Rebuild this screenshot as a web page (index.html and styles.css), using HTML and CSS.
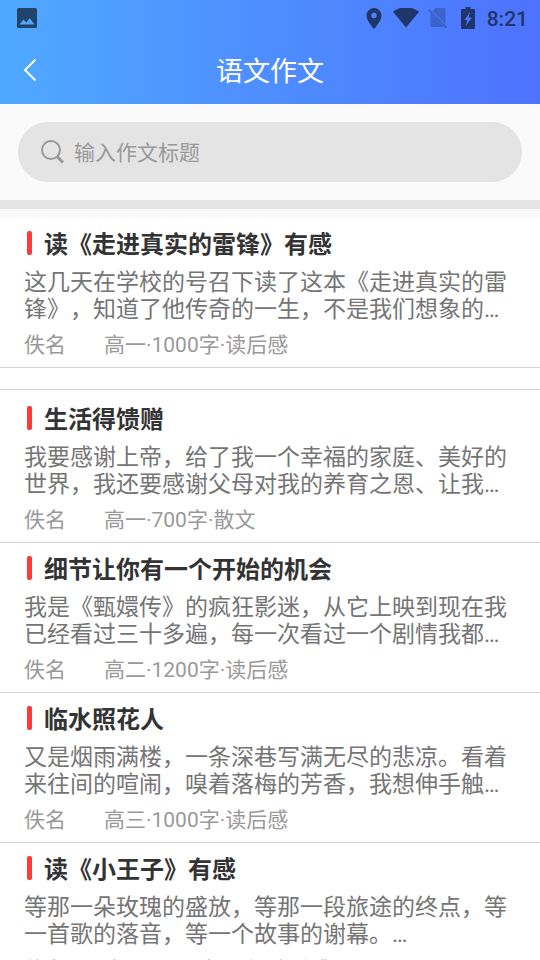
FILE: index.html
```html
<!DOCTYPE html>
<html lang="zh-CN">
<head>
<meta charset="utf-8">
<meta name="viewport" content="width=device-width, initial-scale=1">
<title>语文作文</title>
<link rel="stylesheet" href="styles.css">
</head>
<body>
<header class="top">
  <div class="status">
    <svg class="status-photo" width="20" height="20" viewBox="0 0 20 20"><path fill-rule="evenodd" d="M1.500 0h17A1.500 1.500 0 0 1 20 1.500v17a1.500 1.500 0 0 1-1.500 1.500h-17A1.500 1.500 0 0 1 0 18.500v-17A1.500 1.500 0 0 1 1.500 0zM2.500 16.500h15L12.700 10 9.300 14.500 6.500 11.500z"/></svg>
    <div class="status-right">
      <svg width="16" height="21" viewBox="0 0 16 21"><path fill-rule="evenodd" d="M8 0a7.500 7.500 0 0 0-7.500 7.500C.5 13 8 21 8 21s7.500-8 7.500-13.500A7.500 7.500 0 0 0 8 0zm0 4.800a2.700 2.700 0 1 1 0 5.400 2.700 2.700 0 0 1 0-5.400z"/></svg>
      <svg class="wifi" width="26" height="21" viewBox="0 0 26 21"><path d="M13 19.500 0 3.800C7-2 19-2 26 3.800z"/></svg>
      <svg class="sim" width="20" height="21" viewBox="0 0 20 21"><path d="M7.500 0H16a1.500 1.500 0 0 1 1.500 1.500v14.700L4.700 3zM2.500 5.200 16 18.700q-.4.300-1 .3H4a1.500 1.500 0 0 1-1.500-1.500z"/><path d="M1.500 1 0 2.500l17.800 18 1.500-1.500z"/></svg>
      <svg class="battery" width="14" height="22" viewBox="0 0 14 22"><path fill-rule="evenodd" d="M4.500 0h5v2H13a1 1 0 0 1 1 1v18a1 1 0 0 1-1 1H1a1 1 0 0 1-1-1V3a1 1 0 0 1 1-1h3.500zM9 5 3.500 13H6.200L4.800 19 10.800 10.500H7.500z"/></svg>
      <time>8:21</time>
    </div>
  </div>
  <div class="nav">
    <button class="back" type="button" aria-label="返回"><svg width="14" height="24" viewBox="0 0 14 24"><path d="M12.500 1.500 2 12l10.500 10.500"/></svg></button>
    <h1>语文作文</h1>
  </div>
</header>
<main>
  <form class="search" role="search">
    <label class="search-box">
      <svg width="24" height="24" viewBox="0 0 24 24"><circle cx="10" cy="9" r="9"/><path d="m16 15.500 6 6"/></svg>
      <input type="search" placeholder="输入作文标题" aria-label="输入作文标题">
    </label>
  </form>
  <div class="list">
    <article class="item">
      <h2>读《走进真实的雷锋》有感</h2>
      <p class="summary">这几天在学校的号召下读了这本《走进真实的雷锋》，知道了他传奇的一生，不是我们想象的…</p>
      <p class="meta"><span>佚名</span><span>高一·1000字·读后感</span></p>
    </article>
    <div class="slot"></div>
    <article class="item">
      <h2>生活得馈赠</h2>
      <p class="summary">我要感谢上帝，给了我一个幸福的家庭、美好的世界，我还要感谢父母对我的养育之恩、让我…</p>
      <p class="meta"><span>佚名</span><span>高一·700字·散文</span></p>
    </article>
    <article class="item">
      <h2>细节让你有一个开始的机会</h2>
      <p class="summary">我是《甄嬛传》的疯狂影迷，从它上映到现在我已经看过三十多遍，每一次看过一个剧情我都…</p>
      <p class="meta"><span>佚名</span><span>高二·1200字·读后感</span></p>
    </article>
    <article class="item">
      <h2>临水照花人</h2>
      <p class="summary">又是烟雨满楼，一条深巷写满无尽的悲凉。看着来往间的喧闹，嗅着落梅的芳香，我想伸手触…</p>
      <p class="meta"><span>佚名</span><span>高三·1000字·读后感</span></p>
    </article>
    <article class="item">
      <h2>读《小王子》有感</h2>
      <p class="summary">等那一朵玫瑰的盛放，等那一段旅途的终点，等一首歌的落音，等一个故事的谢幕。…</p>
      <p class="meta"><span>佚名</span><span>高一·1000字以上·读后感</span></p>
    </article>
  </div>
</main>
</body>
</html>
```
FILE: styles.css
```css
* { box-sizing: border-box; margin: 0; padding: 0; }

body {
  background: #fafafa;
  color: #333;
  font-family: Roboto, "Noto Sans CJK SC", sans-serif;
  text-spacing-trim: space-all;
}

body::-webkit-scrollbar { display: none; }

.top {
  background: linear-gradient(to right, #4fa9ff, #4d72ff);
}

.status {
  display: flex;
  align-items: center;
  justify-content: space-between;
  height: 36px;
  padding: 0 12px 0 17px;
  fill: #203569;
  color: #203569;
}

.status-photo { fill: #20446a; }

.status-right { display: flex; align-items: center; }

.wifi { margin-left: 11px; }
.sim { margin-left: 9px; opacity: .35; }
.battery { margin-left: 13px; }

.status time {
  margin-left: 12px;
  padding-top: 2px;
  font-size: 21px;
  font-weight: 500;
  line-height: 34px;
}

.nav {
  display: grid;
  grid-template-columns: 60px 1fr 60px;
  align-items: center;
  height: 68px;
}

.back {
  display: flex;
  align-items: center;
  height: 68px;
  padding-left: 23px;
  border: 0;
  background: none;
}

.back svg { fill: none; stroke: #fff; stroke-width: 2; }

h1 {
  padding-top: 4px;
  color: #fff;
  font-size: 27px;
  font-weight: 400;
  line-height: 64px;
  text-align: center;
}

.search {
  padding: 18px;
  border-bottom: 9px solid #e4e4e4;
}

.search-box {
  display: flex;
  align-items: center;
  gap: 9px;
  height: 60px;
  padding: 2px 24px 0 23px;
  border-radius: 30px;
  background: #e4e4e4;
}

.search-box svg { overflow: visible; fill: none; stroke: #999; stroke-width: 2; }
.search-box path { stroke-width: 3; }

.search-box input {
  flex: 1;
  min-width: 0;
  height: 58px;
  border: 0;
  outline: 0;
  background: none;
  color: #333;
  font: inherit;
  font-size: 21px;
}

.search-box input::placeholder { color: #999; }

.list {
  margin-top: 9px;
  background: #fff;
}

.item {
  padding: 9px 24px 8px;
  border-bottom: 1px solid #d5d5d5;
}

h2 {
  display: flex;
  gap: 12px;
  padding-left: 3px;
  font-size: 24px;
  font-weight: 700;
  line-height: 36px;
}

h2::before {
  content: "";
  width: 5px;
  height: 24px;
  margin-top: 4px;
  border-radius: 2px;
  background: #ff3a37;
}

.summary {
  margin-top: 6px;
  color: #757575;
  font-size: 23px;
  line-height: 27px;
}

.meta {
  display: flex;
  gap: 38px;
  margin-top: 9px;
  color: #999;
  font-size: 21px;
  line-height: 27px;
}

.slot {
  height: 22px;
  margin-bottom: 3px;
  border-bottom: 1px solid #d5d5d5;
}
```
